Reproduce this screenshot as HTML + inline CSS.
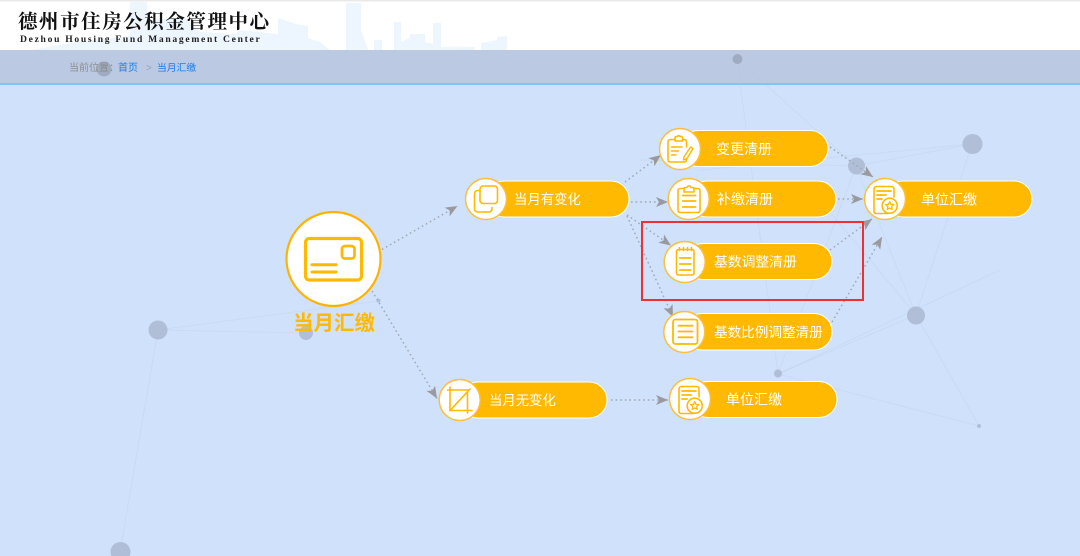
<!DOCTYPE html>
<html lang="zh">
<head>
<meta charset="utf-8">
<title>当月汇缴</title>
<style>
html,body{margin:0;padding:0;background:#d0e1fb;}
body{width:1080px;height:556px;overflow:hidden;position:relative;}
svg{position:absolute;left:0;top:0;display:block;filter:blur(.35px);}
.t{font-family:"Liberation Sans","Noto Sans CJK SC",sans-serif;fill:#fff;font-size:14px;}
.ic{fill:none;stroke:#ffb900;stroke-width:1.6;stroke-linecap:round;stroke-linejoin:round;}
.pill{fill:#ffb900;stroke:#fff;stroke-width:1;}
.ci{fill:#fff;stroke:#fcbf3a;stroke-width:1.5;}
.d{fill:none;stroke:#a3a9b3;stroke-width:1.5;stroke-dasharray:1.6 3;marker-end:url(#ah);}
.p{stroke:#b4c2d8;stroke-width:1;opacity:.22;}
</style>
</head>
<body>
<svg width="1080" height="556" viewBox="0 0 1080 556" xmlns="http://www.w3.org/2000/svg">
<defs>
<marker id="ah" markerUnits="userSpaceOnUse" markerWidth="14" markerHeight="12" refX="12" refY="5" orient="auto">
<path d="M0 0L12 5L0 10L3 5Z" fill="#9a9a9e"/>
</marker>
<g id="unit" class="ic">
<path d="M3 14.5H-8.5Q-11 14.5-11 12V-10Q-11-12.5-8.5-12.5H6.5Q9-12.5 9-10V-2"/>
<path d="M-8-8H6M-8-4H1M-8 0H-3" stroke-width="1.8"/>
<circle cx="4.7" cy="6.7" r="7.5" fill="#fff"/>
<path d="M4.7 2.6L5.9 5.3 8.8 5.6 6.6 7.5 7.2 10.4 4.7 8.9 2.2 10.4 2.8 7.5 .6 5.6 3.5 5.3Z" stroke-width="1.3"/>
</g>
</defs>

<rect width="1080" height="556" fill="#d0e1fb"/>

<!-- header -->
<rect width="1080" height="50" fill="#fff"/>
<rect width="1080" height="1.5" fill="#e9e9e9"/>
<g fill="#edf6fe">
<path d="M32 50L75 42 130 36V2H147V20L185 18 200 32 235 34 240 30 278 34V18L296 24 308 26V38L320 42 330 50Z"/>
<path d="M346 50V3H361V30L368 50Z"/>
<path d="M374 50V40H382V50Z"/>
<path d="M394 50V22H401V42L410 38H419V50Z"/>
<path d="M410 50V34H425V42L433 44V50Z"/>
<path d="M433 50V23H441V50Z"/>
<path d="M441 50V47H475V50Z"/>
<path d="M481 50V43L497 40V37L507 36V50Z"/>
</g>
<text x="18" y="28" font-family="'Liberation Serif','Noto Serif CJK SC',serif" font-weight="700" font-size="19.5px" letter-spacing="1.55" fill="#111">德州市住房公积金管理中心</text>
<text x="20" y="42" font-family="'Liberation Serif',serif" font-weight="700" font-size="9.6px" letter-spacing="1.7" fill="#222">Dezhou Housing Fund Management Center</text>

<!-- breadcrumb band -->
<rect y="50" width="1080" height="33" fill="#bbc9e3"/>
<rect y="83" width="1080" height="2" fill="#80c4f5"/>

<!-- particles -->
<g>
<line class="p" x1="158" y1="330" x2="306" y2="333"/>
<line class="p" x1="158" y1="330" x2="120" y2="552"/>
<line class="p" x1="158" y1="330" x2="378" y2="301"/>
<line class="p" x1="737" y1="59" x2="856" y2="166"/>
<line class="p" x1="737" y1="59" x2="778" y2="374"/>
<line class="p" x1="972" y1="144" x2="856" y2="166"/>
<line class="p" x1="972" y1="144" x2="916" y2="315"/>
<line class="p" x1="972" y1="144" x2="700" y2="170"/>
<line class="p" x1="856" y1="166" x2="916" y2="315"/>
<line class="p" x1="856" y1="166" x2="640" y2="160"/>
<line class="p" x1="856" y1="166" x2="778" y2="374"/>
<line class="p" x1="916" y1="315" x2="778" y2="374"/>
<line class="p" x1="916" y1="315" x2="979" y2="426"/>
<line class="p" x1="916" y1="315" x2="820" y2="200"/>
<line class="p" x1="778" y1="374" x2="979" y2="426"/>
<line class="p" x1="778" y1="374" x2="1000" y2="270"/>
</g>
<g fill="#aab8d0" fill-opacity=".85">
<circle cx="104" cy="69" r="7.5" fill="#9aa6ba"/>
<circle cx="737.5" cy="59" r="5" fill="#9aa6ba"/>
<circle cx="972.5" cy="144" r="10"/>
<circle cx="856.5" cy="166" r="8.5"/>
<circle cx="158" cy="330" r="9.5"/>
<circle cx="306" cy="333" r="7"/>
<circle cx="378.5" cy="300.5" r="2"/>
<circle cx="916" cy="315.5" r="9"/>
<circle cx="778" cy="373.5" r="4"/>
<circle cx="979" cy="426" r="2"/>
<circle cx="120.5" cy="552" r="10"/>
</g>

<!-- breadcrumb text -->
<text class="t" x="69" y="71" style="font-size:10px;fill:#8e8e8e">当前位置：</text>
<text class="t" x="118" y="71" style="font-size:10px;fill:#1d7fe6">首页</text>
<text class="t" x="146" y="71" style="font-size:10px;fill:#9aa3b3">&gt;</text>
<text class="t" x="157" y="71" style="font-size:9.8px;fill:#1d7fe6">当月汇缴</text>

<!-- connectors -->
<path class="d" d="M382 249.5L457.5 206"/>
<path class="d" d="M372 291L437 398.5"/>
<path class="d" d="M611 400H668"/>
<path class="d" d="M625 182L661 155"/>
<path class="d" d="M631 202H668"/>
<path class="d" d="M627 215L671 245.5"/>
<path class="d" d="M627 216L673 317"/>
<path class="d" d="M830 147L873 177"/>
<path class="d" d="M838 199H863"/>
<path class="d" d="M830 250L872 219"/>
<path class="d" d="M832 322L882 237"/>

<!-- main node -->
<circle cx="333.5" cy="259" r="47" fill="#fff" stroke="#ffb300" stroke-width="2.2"/>
<g fill="none" stroke="#ffb900" stroke-linecap="round">
<rect x="305.5" y="238.5" width="56" height="41.5" rx="4" stroke-width="3.2"/>
<rect x="342" y="246" width="12.5" height="12.5" rx="3" stroke-width="2.8"/>
<path d="M312 264.7H336M312 272H336" stroke-width="3"/>
</g>
<text x="293" y="330" font-family="'Liberation Sans','Noto Sans CJK SC',sans-serif" font-weight="700" font-size="20.5px" fill="#ffb900">当月汇缴</text>

<!-- 当月有变化 -->
<rect class="pill" x="486" y="181" width="143" height="36" rx="18"/>
<circle class="ci" cx="486" cy="199" r="20.5"/>
<g class="ic"><rect x="480" y="186" width="17.5" height="17.5" rx="3"/><path d="M480 190.5H478Q474.5 190.5 474.5 194V208.5Q474.5 212 478 212H488.5Q492 212 492 208.5V207.5"/></g>
<text class="t" x="514" y="204" style="font-size:13.4px">当月有变化</text>

<!-- 当月无变化 -->
<rect class="pill" x="460" y="382" width="147" height="36" rx="18"/>
<circle class="ci" cx="459.7" cy="400" r="20.5"/>
<g class="ic"><path d="M447.5 390H469M450 387V410.5H472M467.5 392V413M450 410.5L470 389"/></g>
<text class="t" x="489" y="405" style="font-size:13.4px">当月无变化</text>

<!-- 变更清册 -->
<rect class="pill" x="680" y="130.5" width="148" height="36" rx="18"/>
<circle class="ci" cx="680" cy="149" r="20.5"/>
<g class="ic">
<path d="M686.5 147V142Q686.5 139.5 684 139.5H670.5Q668 139.5 668 142V159.5Q668 162 670.5 162H684Q686.5 162 686.5 159.5V157"/>
<path d="M675 139.5V137.8Q675 136.5 676.5 136.5H677.5Q678.5 134.5 680 136.5H681Q682.5 136.5 682.5 138V141H675Z" fill="#fff"/>
<path d="M671.5 147H682M671.5 151H678.5M671.5 155H676"/>
<path d="M684 157L690.5 147 693 148.5 687 158.5 683.5 160Z" fill="#fff" stroke-width="1.4"/>
</g>
<text class="t" x="716" y="154">变更清册</text>

<!-- 补缴清册 -->
<rect class="pill" x="689" y="181" width="147" height="36" rx="18"/>
<circle class="ci" cx="688.7" cy="199" r="20.5"/>
<g class="ic">
<path d="M684 188.5H680.5Q678 188.5 678 191V210Q678 212.5 680.5 212.5H697.5Q700 212.5 700 210V191Q700 188.5 697.5 188.5H694"/>
<path d="M684 192V188.5Q684 187.5 685.5 187.5H687Q689 184 691 187.5H692.5Q694 187.5 694 188.5V192Z" fill="#fff"/>
<path d="M682.7 195.5H695.5M682.7 201H695.5M682.7 207H695.5" stroke-width="1.8"/>
</g>
<text class="t" x="717" y="204">补缴清册</text>

<!-- 基数调整清册 -->
<rect class="pill" x="685" y="243.5" width="147" height="36" rx="18"/>
<circle class="ci" cx="684.7" cy="262" r="20.5"/>
<g class="ic">
<rect x="676.5" y="249.5" width="17.5" height="25.5" rx="2"/>
<path d="M679.5 247.5V250.5M683.5 247.5V250.5M687.5 247.5V250.5M691.5 247.5V250.5"/>
<path d="M679.8 258H690.7M679.8 264H690.7M679.8 270H690.7" stroke-width="1.7"/>
</g>
<text class="t" x="714" y="266.5" style="font-size:13.8px">基数调整清册</text>

<!-- 基数比例调整清册 -->
<rect class="pill" x="684" y="313.5" width="148" height="36.5" rx="18"/>
<circle class="ci" cx="684.3" cy="332" r="20.5"/>
<g class="ic">
<rect x="673" y="319.5" width="24.5" height="24.5" rx="2.5" stroke-width="1.8"/>
<path d="M678.5 325.7H692.5M678.5 331.5H692.5M678.5 337.3H692.5" stroke-width="1.8"/>
</g>
<text class="t" x="714" y="337" style="font-size:13.6px">基数比例调整清册</text>

<!-- 单位汇缴 bottom -->
<rect class="pill" x="690" y="381.5" width="147" height="36" rx="18"/>
<circle class="ci" cx="690" cy="399" r="20.5"/>
<use href="#unit" x="690" y="399"/>
<text class="t" x="726" y="404.5">单位汇缴</text>

<!-- 单位汇缴 right -->
<rect class="pill" x="885" y="181" width="147" height="36" rx="18"/>
<circle class="ci" cx="885" cy="199" r="20.5"/>
<use href="#unit" x="885" y="199"/>
<text class="t" x="921" y="204.5">单位汇缴</text>

<!-- highlight -->
<rect x="642" y="222" width="221" height="78" fill="none" stroke="#f03030" stroke-width="2"/>
</svg>
</body>
</html>
